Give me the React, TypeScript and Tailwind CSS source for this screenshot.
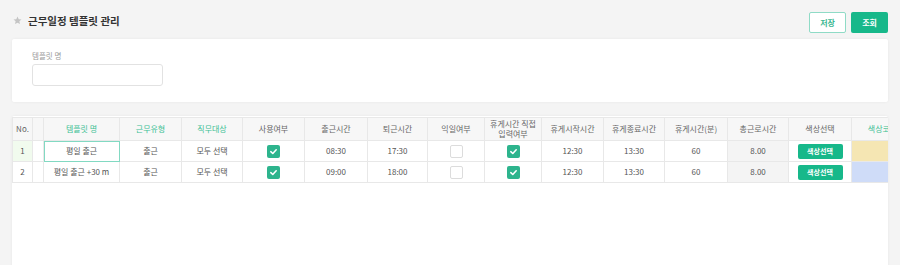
import React from "react";

type Col = { label: React.ReactNode; width: number; accent?: boolean };

const cols: Col[] = [
    {label: "No.", width: 20},
    {label: "", width: 11},
    {label: "템플릿 명", width: 76, accent: true},
    {label: "근무유형", width: 62, accent: true},
    {label: "직무대상", width: 61, accent: true},
    {label: "사용여부", width: 62},
    {label: "출근시간", width: 63},
    {label: "퇴근시간", width: 60},
    {label: "익일여부", width: 57},
    {label: <>휴게시간 직접<br/>입력여부</>, width: 57},
    {label: "휴게시작시간", width: 62},
    {label: "휴게종료시간", width: 61},
    {label: "휴게시간(분)", width: 63},
    {label: "총근로시간", width: 61},
    {label: "색상선택", width: 63},
    {label: "색상코드", width: 62, accent: true},
];

const rows = [
    {no: 1, name: "평일 출근", type: "출근", target: "모두 선택", use: true, start: "08:30", end: "17:30", nextDay: false, breakInput: true, breakStart: "12:30", breakEnd: "13:30", breakMin: "60", total: "8.00", color: "#f5e6b3"},
    {no: 2, name: "평일 출근 +30 m", type: "출근", target: "모두 선택", use: true, start: "09:00", end: "18:00", nextDay: false, breakInput: true, breakStart: "12:30", breakEnd: "13:30", breakMin: "60", total: "8.00", color: "#cfdcf8"},
];

function CheckBox({checked}: { checked: boolean }) {
    if (!checked) {
        return <div className="mx-auto w-[13px] h-[13px] rounded-[2px] border border-[#dcdcdc] bg-white"/>;
    }
    return (
        <div className="mx-auto w-[13px] h-[13px] rounded-[2px] bg-[#2db48d] flex items-center justify-center">
            <svg width="9" height="9" viewBox="0 0 10 10" fill="none">
                <path d="M2 5.2 L4.2 7.2 L8 3" stroke="white" strokeWidth="1.7" strokeLinecap="round" strokeLinejoin="round"/>
            </svg>
        </div>
    );
}

const td = "border border-[#e8e8e8] h-[21px] px-[2px] text-center text-[8px] text-[#555] whitespace-nowrap";

export default function App() {
    return (
        <div className="w-[900px] h-[265px] overflow-hidden bg-[#f4f4f4] px-[12px] pt-[12px] font-['Noto_Sans_CJK_KR','Noto_Sans',sans-serif]">
            <div className="flex items-center justify-between h-[21px]">
                <div className="flex items-center gap-[6px] -mt-[4px]">
                    <svg width="9" height="9" viewBox="0 0 24 24" className="ml-[1px]">
                        <path d="M12 1.5l3.2 6.9 7.3.8-5.5 5 1.6 7.3L12 17.8 5.4 21.5 7 14.2l-5.5-5 7.3-.8z" fill="#c4c4c4"/>
                    </svg>
                    <span className="text-[10.5px] font-bold text-[#333]">근무일정 템플릿 관리</span>
                </div>
                <div className="flex gap-[5px]">
                    <button className="w-[37px] h-[21px] rounded-[2px] border border-[#8fdbc6] bg-white text-[8px] font-bold text-[#3cb891]">저장</button>
                    <button className="w-[37px] h-[21px] rounded-[2px] bg-[#17b88a] text-[8px] font-bold text-white">조회</button>
                </div>
            </div>

            <div className="mt-[6px] h-[63px] bg-white rounded-[2px] shadow-[0_0_3px_rgba(0,0,0,0.06)] px-[20px] pt-[12px]">
                <div className="text-[7.5px] text-[#999] leading-[10px]">템플릿 명</div>
                <div className="mt-[3px] w-[131px] h-[22px] rounded-[3px] border border-[#e2e2e2] bg-white"/>
            </div>

            <div className="mt-[14px] h-[160px] bg-white rounded-[2px] shadow-[0_0_3px_rgba(0,0,0,0.06)] overflow-hidden pt-[1px]">
                <table className="table-fixed border-collapse" style={{width: cols.reduce((s, c) => s + c.width, 0)}}>
                    <colgroup>
                        {cols.map((c, i) => <col key={i} style={{width: c.width}}/>)}
                    </colgroup>
                    <thead>
                    <tr className="bg-[#f7f7f7]">
                        {cols.map((c, i) => (
                            <th key={i}
                                className={`border border-[#e8e8e8] h-[23px] px-[1px] text-center text-[8px] font-normal leading-[10.5px] whitespace-nowrap ${c.accent ? "text-[#3cbf94]" : "text-[#666]"}`}>
                                {c.label}
                            </th>
                        ))}
                    </tr>
                    </thead>
                    <tbody>
                    {rows.map((r) => (
                        <tr key={r.no}>
                            <td className={`${td} text-[#333] ${r.no === 1 ? "bg-[#f1fbee]" : ""}`}>{r.no}</td>
                            <td className={td}></td>
                            <td className={`${td} ${r.no === 1 ? "outline outline-[1.5px] -outline-offset-[1.5px] outline-[#82d9c2]" : ""}`}>{r.name}</td>
                            <td className={td}>{r.type}</td>
                            <td className={td}>{r.target}</td>
                            <td className={td}><CheckBox checked={r.use}/></td>
                            <td className={td}>{r.start}</td>
                            <td className={td}>{r.end}</td>
                            <td className={td}><CheckBox checked={r.nextDay}/></td>
                            <td className={td}><CheckBox checked={r.breakInput}/></td>
                            <td className={td}>{r.breakStart}</td>
                            <td className={td}>{r.breakEnd}</td>
                            <td className={td}>{r.breakMin}</td>
                            <td className={`${td} bg-[#f4f4f4]`}>{r.total}</td>
                            <td className={td}>
                                <div className="mx-auto w-[45px] h-[15px] rounded-[2px] bg-[#17b88a] text-white font-bold text-[7px] leading-[15px]">색상선택</div>
                            </td>
                            <td className={td} style={{background: r.color}}></td>
                        </tr>
                    ))}
                    </tbody>
                </table>
            </div>
        </div>
    );
}
